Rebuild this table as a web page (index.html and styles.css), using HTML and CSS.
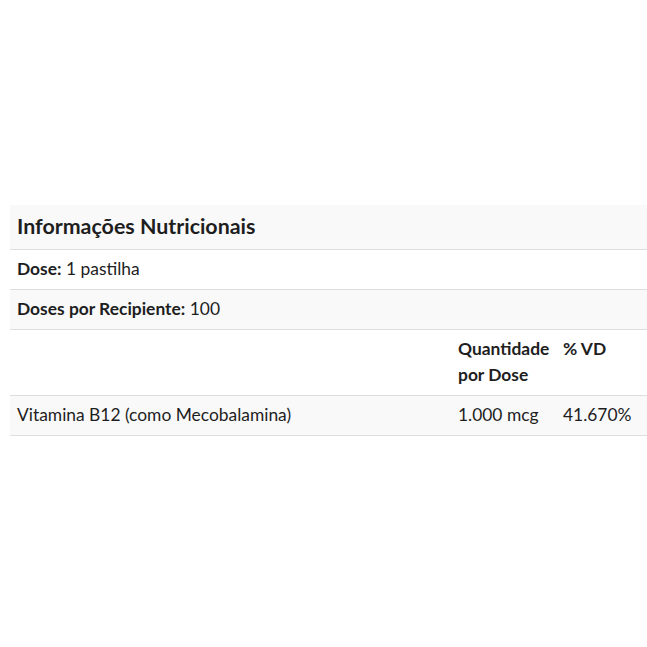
FILE: index.html
```html
<!DOCTYPE html>
<html lang="pt">
<head>
<meta charset="utf-8">
<link rel="stylesheet" href="styles.css">
</head>
<body>
<div class="wrap">
<table class="nutri">
  <colgroup>
    <col class="c1"><col class="c2"><col class="c3">
  </colgroup>
  <tbody>
    <tr class="odd"><td colspan="3" class="title">Informações Nutricionais</td></tr>
    <tr><td colspan="3"><b>Dose:</b> 1 pastilha</td></tr>
    <tr class="odd"><td colspan="3"><b>Doses por Recipiente:</b> 100</td></tr>
    <tr><td></td><td class="hd">Quantidade por Dose</td><td class="hd">% VD</td></tr>
    <tr class="odd"><td>Vitamina B12 (como Mecobalamina)</td><td>1.000 mcg</td><td>41.670%</td></tr>
  </tbody>
</table>
</div>
</body>
</html>
```
FILE: styles.css
```css
html, body { margin: 0; padding: 0; background: #fff; }
body {
  font-family: Lato, "Open Sans", sans-serif;
  font-size: 17.4px;
  color: #1e1e1e;
}
.wrap { padding: 205px 0 0 10px; }
.nutri {
  width: 637px;
  border-collapse: collapse;
  table-layout: fixed;
}
.c1 { width: 441px; }
.c2 { width: 105px; }
.c3 { width: 91px; }
.nutri td {
  padding: 6px 8px 7px 7px;
  line-height: 26px;
  vertical-align: top;
  border-bottom: 1px solid #dedede;
  text-align: left;
}
.nutri tr.odd td { background: #f9f9f9; }
.nutri td.title {
  font-size: 21.4px;
  font-weight: 700;
  padding-top: 8px;
  padding-bottom: 10px;
}
.nutri b, .nutri td.hd { font-weight: 700; }
```
